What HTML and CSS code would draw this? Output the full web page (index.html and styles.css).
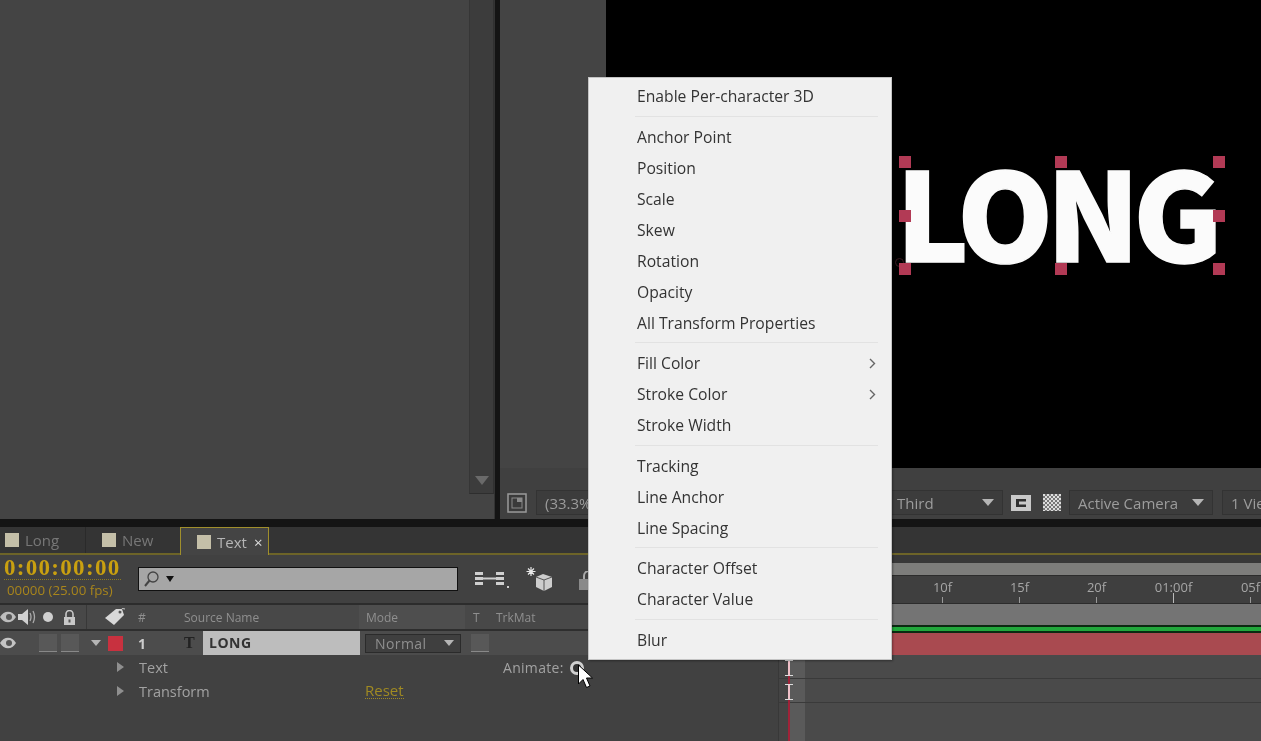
FILE: index.html
```html
<!DOCTYPE html>
<html lang="en">
    <head>
        <meta charset="UTF-8">
        <title>After Effects - Animate menu</title>
        <link rel="stylesheet" href="styles.css">
    </head>
    <body>
        <div class="screen">
            <!-- panels on top -->
            <div class="workspace">
                <div class="project">
                    <div class="project-body"></div>
                    <div class="scrollbar">
                        <svg class="scroll-down" width="14" height="9" viewBox="0 0 14 9"><path d="M0 0h14L7 9z" fill="#6a6a6a"/></svg>
                    </div>
                </div>
                <div class="comp">
                    <div class="comp-main">
                        <div class="comp-side"></div>
                        <div class="viewer">
                            <div class="long-text">LONG</div>
                            <span class="anchor"></span>
                            <span class="handle h-tl"></span>
                            <span class="handle h-tm"></span>
                            <span class="handle h-tr"></span>
                            <span class="handle h-ml"></span>
                            <span class="handle h-mr"></span>
                            <span class="handle h-bl"></span>
                            <span class="handle h-bm"></span>
                            <span class="handle h-br"></span>
                        </div>
                    </div>
                    <div class="comp-footer">
                        <svg class="snap-icon" width="20" height="20" viewBox="0 0 20 20"><rect x="1" y="1" width="18" height="18" fill="#3a3a3a" stroke="#9a9a9a" stroke-width="1.5"/><rect x="5" y="5" width="10" height="10" fill="none" stroke="#8a8a8a"/><rect x="10" y="5" width="5" height="4" fill="#8a8a8a"/></svg>
                        <div class="drop zoom-drop">(33.3%)</div>
                        <div class="drop third-drop"><span class="drop-label">Third</span><i class="arrow-down"></i></div>
                        <svg class="region-icon" width="20" height="16" viewBox="0 0 20 16"><rect width="20" height="16" fill="#c9c9c9"/><rect x="5" y="4" width="10" height="8" fill="#2f2f2f"/><rect x="8" y="6.500" width="7" height="3" fill="#c9c9c9"/></svg>
                        <div class="checker"></div>
                        <div class="drop camera-drop"><span class="drop-label">Active Camera</span><i class="arrow-down"></i></div>
                        <div class="drop view-drop">1 View</div>
                    </div>
                </div>
            </div>

            <!-- timeline -->
            <div class="timeline">
                <div class="tabs">
                    <div class="tab tab-long"><span class="swatch"></span>Long</div>
                    <div class="tab tab-new"><span class="swatch"></span>New</div>
                    <div class="tab tab-active"><span class="swatch"></span>Text<span class="tab-close">×</span></div>
                </div>
                <div class="timeline-body">
                    <div class="layers">
                        <div class="controls">
                            <div class="timecode">
                                <div class="time-main">0:00:00:00</div>
                                <div class="time-fps">00000 (25.00 fps)</div>
                            </div>
                            <div class="search">
                                <svg width="20" height="18" viewBox="0 0 20 18"><circle cx="9" cy="7" r="5" fill="none" stroke="#444" stroke-width="1.300"/><path d="M5.500 10.500L1 16" stroke="#444" stroke-width="2"/></svg>
                                <i class="arrow-down black"></i>
                            </div>
                            <svg class="ctl-graph" width="36" height="20" viewBox="0 0 36 20"><g fill="#cfcfcf"><rect x="1" y="3" width="8" height="3"/><rect x="1" y="8" width="8" height="3"/><rect x="1" y="13" width="8" height="3"/><rect x="22" y="3" width="8" height="3"/><rect x="22" y="8" width="8" height="3"/><rect x="22" y="13" width="8" height="3"/><rect x="9" y="8.500" width="13" height="2"/><rect x="33" y="17" width="2" height="2"/></g></svg>
                            <svg class="ctl-cube" width="30" height="26" viewBox="0 0 30 26"><path d="M6 1v9M1.500 5.500h9M3 2.500l6 6M9 2.500l-6 6" stroke="#e8e8e8" stroke-width="1.200"/><path d="M18 8l9 3v10l-8 4-8-4V11z" fill="#cdcdcd"/><path d="M11 11l8 3 8-3M19 14v11" stroke="#555" fill="none"/></svg>
                            <svg class="ctl-lock" width="20" height="20" viewBox="0 0 20 20"><path d="M6 8V5a5 5 0 0110 0v3" fill="none" stroke="#aaa" stroke-width="2"/><rect x="1" y="8" width="18" height="11" fill="#8a8a8a"/></svg>
                        </div>
                        <div class="col-head">
                            <div class="cell cell-av">
                                <svg width="17" height="12" viewBox="0 0 17 12"><path d="M0 6c4-7 12-7 16 0-4 7-12 7-16 0z" fill="#bdbdbd"/><circle cx="9" cy="6" r="3" fill="#555"/></svg>
                                <svg width="18" height="16" viewBox="0 0 18 16"><path d="M0 5h4l6-5v16l-6-5H0z" fill="#d0d0d0"/><path d="M12 4q2 4 0 8M15 2q3 6 0 12" fill="none" stroke="#aaa" stroke-width="1.300"/></svg>
                                <svg class="av-dot" width="12" height="12" viewBox="0 0 12 12"><circle cx="6" cy="6" r="5" fill="#cfcfcf"/></svg>
                                <svg class="av-lock" width="13" height="15" viewBox="0 0 13 15"><path d="M3 7V4a3.500 3.500 0 017 0v3" fill="none" stroke="#c8c8c8" stroke-width="1.600"/><rect x="1" y="7" width="11" height="8" fill="#c8c8c8"/><rect x="5.500" y="9.500" width="2" height="3" fill="#555"/></svg>
                            </div>
                            <div class="cell cell-label">
                                <svg width="22" height="20" viewBox="0 0 22 20"><path d="M1 11L12 2h6l2 6-10 10z" fill="#d8d8d8"/><circle cx="16" cy="5" r="1.500" fill="#555"/><path d="M16 4q2-4 5-2" fill="none" stroke="#ccc"/></svg>
                            </div>
                            <div class="cell cell-num">#</div>
                            <div class="cell cell-name">Source Name</div>
                            <div class="cell cell-mode">Mode</div>
                            <div class="cell cell-t">T</div>
                            <div class="cell cell-trk">TrkMat</div>
                        </div>
                        <div class="layer-row">
                            <div class="cell cell-av">
                                <svg width="17" height="12" viewBox="0 0 17 12"><path d="M0 6c4-7 12-7 16 0-4 7-12 7-16 0z" fill="#c4c4c4"/><circle cx="9" cy="6" r="3" fill="#555"/></svg>
                                <span class="sw-box first"></span>
                                <span class="sw-box"></span>
                            </div>
                            <div class="cell cell-label">
                                <i class="arrow-down small"></i>
                                <span class="label-red"></span>
                            </div>
                            <div class="cell cell-num layer-num">1</div>
                            <div class="cell cell-name">
                                <span class="type-t">T</span>
                                <span class="name-box">LONG</span>
                            </div>
                            <div class="cell cell-mode">
                                <div class="mode-drop">Normal<i class="arrow-down small"></i></div>
                            </div>
                            <div class="cell cell-t"><span class="sw-box"></span></div>
                        </div>
                        <div class="prop-row">
                            <i class="arrow-right"></i>
                            <span class="prop-name">Text</span>
                            <span class="animate">Animate:</span>
                            <svg class="animate-btn" width="16" height="16" viewBox="0 0 16 16"><circle cx="8" cy="8" r="5.500" fill="#333" stroke="#d0d0d0" stroke-width="3"/></svg>
                            <svg class="cursor" width="18" height="25" viewBox="0 0 18 25"><path d="M1.500 1v19l4.500-4.500 3.500 8 3.500-1.500-3.500-8h6z" fill="#fff" stroke="#000"/></svg>
                        </div>
                        <div class="prop-row">
                            <i class="arrow-right"></i>
                            <span class="prop-name">Transform</span>
                            <span class="reset">Reset</span>
                        </div>
                    </div>
                    <div class="tracks">
                        <div class="nav-gap"></div>
                        <div class="nav-bar"></div>
                        <div class="ruler">
                            <div class="mark">10f</div>
                            <div class="mark">15f</div>
                            <div class="mark">20f</div>
                            <div class="mark major">01:00f</div>
                            <div class="mark">05f</div>
                        </div>
                        <div class="work-area"></div>
                        <div class="green-bar"></div>
                        <div class="red-bar"></div>
                        <div class="track-row"></div>
                        <div class="track-row"></div>
                        <div class="playhead"></div>
                        <div class="ibeam ibeam-1"></div>
                        <div class="ibeam ibeam-2"></div>
                    </div>
                </div>
            </div>

            <!-- context menu -->
            <div class="menu">
                <div class="menu-item">Enable Per-character 3D</div>
                <div class="menu-sep"></div>
                <div class="menu-item">Anchor Point</div>
                <div class="menu-item">Position</div>
                <div class="menu-item">Scale</div>
                <div class="menu-item">Skew</div>
                <div class="menu-item">Rotation</div>
                <div class="menu-item">Opacity</div>
                <div class="menu-item">All Transform Properties</div>
                <div class="menu-sep"></div>
                <div class="menu-item">Fill Color
                    <svg width="7" height="11" viewBox="0 0 7 11"><path d="M1 1l4.500 4.500L1 10" fill="none" stroke="#666" stroke-width="1.400"/></svg>
                </div>
                <div class="menu-item">Stroke Color
                    <svg width="7" height="11" viewBox="0 0 7 11"><path d="M1 1l4.500 4.500L1 10" fill="none" stroke="#666" stroke-width="1.400"/></svg>
                </div>
                <div class="menu-item">Stroke Width</div>
                <div class="menu-sep"></div>
                <div class="menu-item">Tracking</div>
                <div class="menu-item">Line Anchor</div>
                <div class="menu-item">Line Spacing</div>
                <div class="menu-sep"></div>
                <div class="menu-item">Character Offset</div>
                <div class="menu-item">Character Value</div>
                <div class="menu-sep"></div>
                <div class="menu-item">Blur</div>
            </div>
        </div>
    </body>
</html>
```

FILE: styles.css
```css
* {
    margin: 0;
    padding: 0;
    box-sizing: border-box;
}

html, body {
    height: 100%;
    overflow: hidden;
    background-color: #444;
}

body {
    font-family: "Open Sans", "Liberation Sans", sans-serif;
    font-size: 13px;
    color: #a8a8a8;
}

/* the source is a video frame, so everything is slightly soft */
.screen {
    position: relative;
    width: 1261px;
    height: 741px;
    overflow: hidden;
    filter: blur(0.5px);
}

/* top panels */
.workspace {
    display: flex;
    height: 527px;
    background-color: #141414;
    padding-bottom: 8px;
}

.project {
    display: flex;
    flex: none;
    width: 495px;
    background-color: #444;
    border-right: 1px solid #333;
}

.project-body {
    width: 469px;
}

.scrollbar {
    position: relative;
    width: 25px;
    height: 494px;
    background-color: #3c3c3c;
    border-left: 1px solid #363636;
    border-right: 1px solid #303030;
    border-bottom: 1px solid #2e2e2e;
}

.scroll-down {
    position: absolute;
    left: 5px;
    bottom: 8px;
}

.comp {
    display: flex;
    flex-direction: column;
    flex: none;
    width: 761px;
    margin-left: 5px;
    background-color: #404040;
}

.comp-main {
    display: flex;
    height: 468px;
}

.comp-side {
    width: 106px;
    background-color: #444;
}

.viewer {
    position: relative;
    flex: 1;
    background-color: #000;
    overflow: hidden;
}

.long-text {
    position: absolute;
    left: 290px;
    top: 127px;
    font: 900 122px/1.35 "Noto Sans CJK SC", "Noto Sans", sans-serif;
    letter-spacing: -6.500px;
    color: #fbfbfb;
    -webkit-text-stroke: 1.500px #fbfbfb;
    white-space: nowrap;
}

.anchor {
    position: absolute;
    left: 289px;
    top: 258px;
    width: 9px;
    height: 9px;
    border: 1px solid #3a1a20;
    border-radius: 50%;
}

.handle {
    position: absolute;
    width: 12px;
    height: 12px;
    background-color: #b23a55;
}

.h-tl { left: 293px; top: 156px; }
.h-tm { left: 449px; top: 156px; }
.h-tr { left: 607px; top: 156px; }
.h-ml { left: 293px; top: 210px; }
.h-mr { left: 607px; top: 210px; }
.h-bl { left: 293px; top: 263px; }
.h-bm { left: 449px; top: 263px; }
.h-br { left: 607px; top: 263px; }

.comp-footer {
    display: flex;
    align-items: center;
    height: 50px;
    padding: 22px 0 3px 7px;
    background-color: #404040;
    overflow: hidden;
}

.comp-footer > * {
    flex: none;
}

.drop {
    display: flex;
    align-items: center;
    height: 25px;
    padding-left: 8px;
    font-size: 15px;
    color: #9c9c9c;
    background-color: #3c3c3c;
    border: 1px solid #333;
    white-space: nowrap;
}

.zoom-drop {
    width: 70px;
    margin-left: 9px;
}

.third-drop {
    width: 113px;
    margin-left: 284px;
    padding-left: 6px;
}

.drop-label {
    flex: 1;
}

.drop .arrow-down {
    margin-right: 8px;
}

.region-icon {
    margin-left: 8px;
}

.checker {
    width: 18px;
    height: 17px;
    margin-left: 12px;
    background-color: #ddd;
    background-image: conic-gradient(#777 25%, #ddd 0 50%, #777 0 75%, #ddd 0);
    background-size: 4px 4px;
}

.camera-drop {
    width: 144px;
    margin-left: 8px;
}

.view-drop {
    width: 60px;
    margin-left: 9px;
}

.arrow-down {
    display: inline-block;
    width: 0;
    height: 0;
    border-left: 6px solid transparent;
    border-right: 6px solid transparent;
    border-top: 7px solid #b5b5b5;
}

.arrow-down.small {
    border-left-width: 5px;
    border-right-width: 5px;
    border-top-width: 6px;
}

.arrow-down.black {
    border-left-width: 4px;
    border-right-width: 4px;
    border-top: 6px solid #111;
}

.arrow-right {
    display: inline-block;
    width: 0;
    height: 0;
    border-top: 5px solid transparent;
    border-bottom: 5px solid transparent;
    border-left: 7px solid #8f8f8f;
}

/* timeline */
.tabs {
    display: flex;
    height: 28px;
    background-color: #343434;
    border-bottom: 2px solid #6d6428;
}

.tab {
    display: flex;
    align-items: center;
    font-size: 15px;
    color: #777;
}

.swatch {
    width: 14px;
    height: 14px;
    margin-right: 6px;
    background-color: #c4bfa8;
}

.tab-long {
    width: 86px;
    padding-left: 5px;
    border-right: 1px solid #2a2a2a;
}

.tab-new {
    width: 94px;
    padding-left: 16px;
}

.tab-active {
    width: 89px;
    height: 28px;
    padding-left: 16px;
    color: #b5b5b5;
    background-color: #444;
    border: 1px solid #a08f2c;
    border-bottom: 0;
}

.tab-close {
    margin-left: 7px;
    font-size: 15px;
    color: #ddd;
}

.timeline-body {
    display: flex;
    height: 186px;
    background-color: #414141;
}

.layers {
    flex: none;
    width: 779px;
    border-right: 1px solid #383838;
}

.controls {
    display: flex;
    align-items: flex-start;
    height: 50px;
    border-bottom: 2px solid #2c2c2c;
}

.timecode {
    flex: none;
    width: 138px;
    padding: 3px 0 0 4px;
}

.time-main {
    width: 117px;
    height: 22px;
    font: bold 23px/20px "Liberation Serif", serif;
    letter-spacing: 1.3px;
    color: #c9a010;
    border-bottom: 1px dotted #8c7a20;
    white-space: nowrap;
}

.time-fps {
    padding: 2px 0 0 3px;
    font-size: 13.300px;
    line-height: 16px;
    color: #a8851c;
    white-space: nowrap;
}

.search {
    display: flex;
    flex: none;
    align-items: center;
    gap: 2px;
    width: 320px;
    height: 24px;
    margin-top: 12px;
    padding-left: 5px;
    background-color: #a6a6a6;
    border: 1px solid #111;
}

.ctl-graph {
    margin: 14px 0 0 16px;
}

.ctl-cube {
    margin: 11px 0 0 15px;
}

.ctl-lock {
    margin: 16px 0 0 23px;
}

.col-head, .layer-row {
    display: flex;
    align-items: center;
}

.col-head {
    height: 26px;
    font-size: 12px;
    color: #8f8f8f;
    background-color: #484848;
    border-bottom: 2px solid #2e2e2e;
}

.layer-row {
    height: 24px;
    background-color: #4c4c4c;
}

.cell {
    display: flex;
    align-items: center;
    height: 100%;
    flex: none;
}

.cell-av {
    width: 86px;
    gap: 1px;
}

.av-dot {
    margin-left: 5px;
}

.av-lock {
    margin-left: 8px;
}

.cell-label {
    width: 44px;
    padding-left: 18px;
}

.col-head .cell-label {
    padding-left: 17px;
    border-left: 1px solid #383838;
}

.cell-num {
    width: 46px;
    padding-left: 8px;
}

.cell-name {
    width: 183px;
    padding-left: 8px;
}

.cell-mode {
    width: 106px;
    padding-left: 5px;
}

.col-head .cell-mode {
    padding-left: 7px;
    background-color: #4e4e4e;
}

.cell-t {
    width: 24px;
    padding-left: 8px;
}

.layer-row .cell-t {
    padding-left: 5px;
}

.cell-trk {
    padding-left: 7px;
}

.layer-num {
    font-weight: 700;
    font-size: 14px;
    color: #ccc;
}

.sw-box {
    width: 18px;
    height: 18px;
    background-color: #585858;
    border-bottom: 1px solid #888;
}

.sw-box.first {
    margin-left: 21px;
}

.layer-row .sw-box + .sw-box {
    margin-left: 3px;
}

.layer-row .cell-label {
    gap: 7px;
    padding-left: 5px;
}

.label-red {
    width: 15px;
    height: 15px;
    background-color: #c8313f;
}

.type-t {
    width: 19px;
    font: bold 16px "Liberation Serif", serif;
    color: #222;
}

.name-box {
    flex: 1;
    height: 24px;
    padding-left: 6px;
    font-weight: 700;
    font-size: 14px;
    line-height: 24px;
    letter-spacing: 0.5px;
    color: #333;
    background-color: #bdbdbd;
}

.layer-row .cell-name {
    width: 184px;
}

.mode-drop {
    display: flex;
    align-items: center;
    justify-content: space-between;
    width: 96px;
    height: 19px;
    padding: 0 6px 0 9px;
    font-size: 14px;
    letter-spacing: 0.4px;
    color: #8f8f8f;
    background-color: #3f3f3f;
    border: 1px solid #2b2b2b;
}

.prop-row {
    position: relative;
    display: flex;
    align-items: center;
    height: 24px;
    padding-left: 117px;
    font-size: 14.500px;
    color: #a2a2a2;
}

.prop-name {
    margin-left: 15px;
}

.animate {
    position: absolute;
    left: 503px;
    font-size: 14px;
    letter-spacing: 0.3px;
}

.animate-btn {
    position: absolute;
    left: 569px;
    top: 5px;
}

.cursor {
    position: absolute;
    left: 577px;
    top: 9px;
}

.reset {
    position: absolute;
    left: 365px;
    font-size: 15px;
    color: #a08a22;
    border-bottom: 1px dotted #a08a22;
    line-height: 15px;
}

/* track area */
.tracks {
    position: relative;
    flex: 1;
    min-width: 0;
    overflow: hidden;
    background: linear-gradient(90deg, #444 0, #444 10px, #5a5a5a 10px, #5a5a5a 26px, #4a4a4a 26px);
}

.nav-gap {
    height: 8px;
    background-color: #383838;
}

.nav-bar {
    height: 12px;
    background-color: #7d7d7b;
}

.ruler {
    display: flex;
    height: 29px;
    padding-left: 125px;
    background-color: #3f3f3f;
    border-top: 1px solid #2c2c2c;
    border-bottom: 1px solid #2c2c2c;
}

.mark {
    position: relative;
    flex: none;
    width: 77px;
    padding-top: 2px;
    font-size: 13px;
    text-align: center;
    color: #a6a6a6;
}

.mark::after {
    content: "";
    position: absolute;
    left: 38px;
    bottom: 0;
    width: 1px;
    height: 6px;
    background-color: #999;
}

.mark.major::after {
    height: 10px;
    background-color: #bbb;
}

.work-area {
    height: 21px;
    background-color: #747474;
}

.green-bar {
    height: 8px;
    background-color: #22a83c;
    border-top: 2px solid #0c2a12;
    border-bottom: 2px solid #0c2a12;
}

.red-bar {
    height: 22px;
    background-color: #a94a50;
}

.track-row {
    height: 24px;
    border-bottom: 1px solid #3a3a3a;
}

.playhead {
    position: absolute;
    left: 9px;
    top: 100px;
    bottom: 0;
    width: 2px;
    background-color: #a02238;
}

.ibeam {
    position: absolute;
    left: 6px;
    width: 8px;
    height: 16px;
    border-top: 1px solid #ddd;
    border-bottom: 1px solid #ddd;
    background: linear-gradient(90deg, transparent 3px, #f0c0c8 3px, #f0c0c8 5px, transparent 5px);
}

.ibeam-1 { top: 105px; }
.ibeam-2 { top: 129px; }

/* context menu */
.menu {
    position: absolute;
    left: 588px;
    top: 77px;
    width: 304px;
    height: 583px;
    padding-top: 2.500px;
    background-color: #f0f0f0;
    border: 1px solid #c4c4c4;
    box-shadow: 1px 1px 2px rgba(0, 0, 0, 0.35);
}

.menu-item {
    display: flex;
    align-items: center;
    justify-content: space-between;
    height: 31px;
    padding: 0 15px 0 48px;
    font-size: 15.700px;
    color: #333;
}

.menu-sep {
    height: 9.5px;
    padding-top: 4px;
    margin: 0 13px 0 46px;
}

.menu-sep::after {
    content: "";
    display: block;
    height: 1px;
    background-color: #e2e2e2;
}
```
